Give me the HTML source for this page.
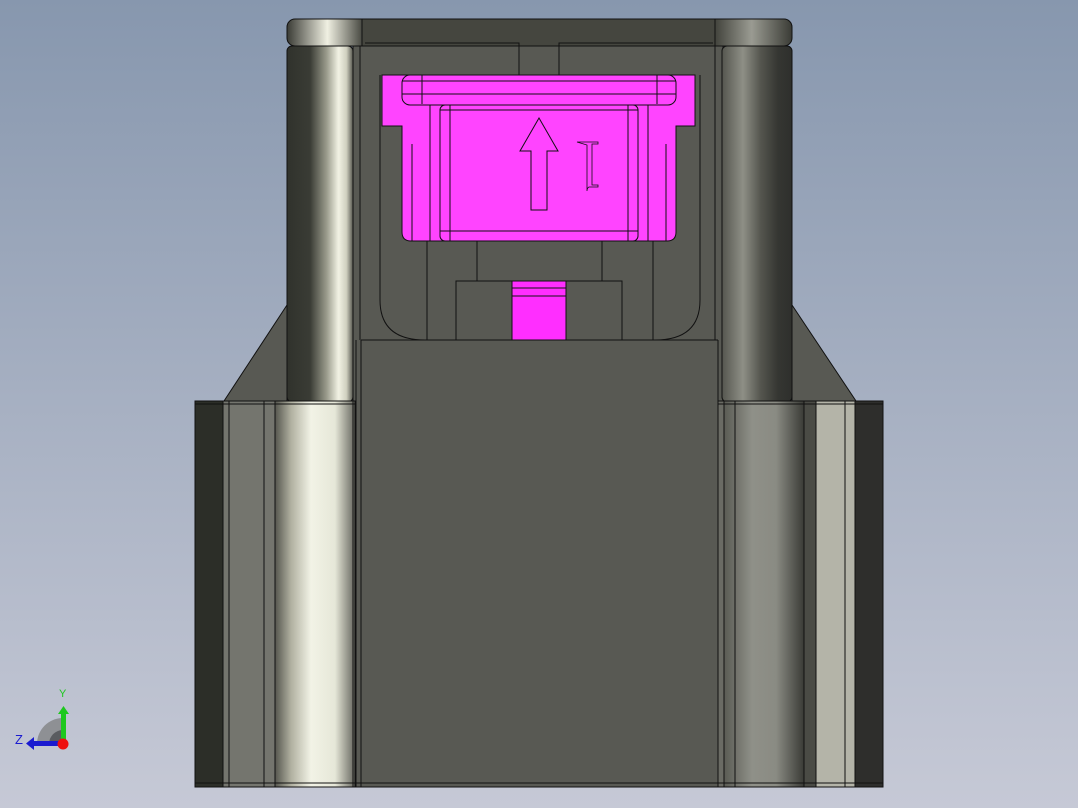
<!DOCTYPE html>
<html><head><meta charset="utf-8"><style>
html,body{margin:0;padding:0;width:1078px;height:808px;overflow:hidden}
svg{display:block}
</style></head><body>
<svg width="1078" height="808" viewBox="0 0 1078 808" xmlns="http://www.w3.org/2000/svg">
<defs>
<linearGradient id="bg" x1="0" y1="0" x2="0" y2="1">
<stop offset="0" stop-color="#8797ae"/><stop offset="1" stop-color="#c6c9d6"/></linearGradient>
<linearGradient id="lc" x1="0" y1="0" x2="1" y2="0">
<stop offset="0" stop-color="#30322c"/><stop offset="0.35" stop-color="#3a3c35"/><stop offset="0.6" stop-color="#9a9b8c"/><stop offset="0.78" stop-color="#f2f2e4"/><stop offset="0.9" stop-color="#d0d0c0"/><stop offset="1" stop-color="#55564e"/></linearGradient>
<linearGradient id="rc" x1="0" y1="0" x2="1" y2="0">
<stop offset="0" stop-color="#55564f"/><stop offset="0.3" stop-color="#8e8f86"/><stop offset="0.55" stop-color="#55564f"/><stop offset="0.8" stop-color="#353632"/><stop offset="1" stop-color="#2e2f2c"/></linearGradient>
<linearGradient id="lc2" x1="0" y1="0" x2="1" y2="0">
<stop offset="0" stop-color="#55564e"/><stop offset="0.2" stop-color="#b0b0a0"/><stop offset="0.45" stop-color="#f2f3e6"/><stop offset="0.75" stop-color="#e6e7d8"/><stop offset="1" stop-color="#65665e"/></linearGradient>
<linearGradient id="rc2" x1="0" y1="0" x2="1" y2="0">
<stop offset="0" stop-color="#5a5b54"/><stop offset="0.35" stop-color="#8f9088"/><stop offset="0.65" stop-color="#8a8b83"/><stop offset="1" stop-color="#3a3b36"/></linearGradient>
<linearGradient id="cap" x1="0" y1="0" x2="1" y2="0">
<stop offset="0" stop-color="#3a3b35"/><stop offset="0.08" stop-color="#f0f0e2"/><stop offset="0.15" stop-color="#45463f"/><stop offset="0.85" stop-color="#45463f"/><stop offset="0.92" stop-color="#9a9b92"/><stop offset="1" stop-color="#3a3b35"/></linearGradient>
</defs>
<rect width="1078" height="808" fill="url(#bg)"/>
<g stroke="#111" stroke-width="1">
<polygon points="224,401 287,305 287,401" fill="#585953"/>
<polygon points="792,305 856,401 792,401" fill="#585953"/>
<rect x="353" y="46" width="370" height="360" fill="#585953"/>
<path d="M380 75 V300 Q380 340 425 340 H655 Q700 340 700 300 V75" fill="#585953"/>
<line x1="360" y1="40" x2="360" y2="340"/>
<line x1="715" y1="40" x2="715" y2="340"/>
<line x1="427" y1="240" x2="427" y2="340"/>
<line x1="477" y1="240" x2="477" y2="340"/>
<line x1="602" y1="240" x2="602" y2="340"/>
<line x1="653" y1="240" x2="653" y2="340"/>
<rect x="456" y="281" width="166" height="59" fill="#585953"/>
<rect x="512" y="281" width="54" height="59" fill="#ff2eff"/>
<line x1="512" y1="288" x2="566" y2="288"/><line x1="512" y1="296" x2="566" y2="296"/>
<rect x="287" y="19" width="505" height="27" rx="8" fill="url(#cap)"/>
<line x1="362" y1="19" x2="362" y2="46"/><line x1="715" y1="19" x2="715" y2="46"/>
<path d="M365 43 H519 V75 M559 75 V43 H713" fill="none"/>
<rect x="287" y="46" width="66" height="356" rx="5" fill="url(#lc)"/>
<rect x="722" y="46" width="70" height="356" rx="5" fill="url(#rc)"/>
<path d="M382 75 H695 V126 H676 V232 Q676 241 667 241 H411 Q402 241 402 232 V126 H382 Z" fill="#ff44ff"/>
<rect x="402" y="75" width="274" height="30" rx="8" fill="#ff44ff"/>
<line x1="422" y1="75" x2="422" y2="104"/><line x1="657" y1="75" x2="657" y2="104"/>
<line x1="402" y1="81" x2="676" y2="81"/><line x1="402" y1="94" x2="676" y2="94"/>
<rect x="440" y="105" width="198" height="136" rx="5" fill="#ff44ff"/>
<line x1="450" y1="105" x2="450" y2="241"/><line x1="628" y1="105" x2="628" y2="241"/>
<line x1="440" y1="110" x2="638" y2="110"/><line x1="440" y1="231" x2="638" y2="231"/>
<line x1="412" y1="144" x2="412" y2="241"/><line x1="666" y1="144" x2="666" y2="241"/>
<line x1="430" y1="105" x2="430" y2="241"/><line x1="648" y1="105" x2="648" y2="241"/>
<path d="M539 118 L558 151 H547 V210 H531 V151 H520 Z" fill="none"/>
<path d="M577 142 H598 V144 H592 V185 H598 V187 H589 Q587 188 587 191 V145 Z" fill="none" stroke-width="0.8"/>
<rect x="195" y="401" width="688" height="386" fill="#585953"/>
<rect x="195" y="401" width="28" height="386" fill="#2c2e28"/>
<rect x="223" y="401" width="52" height="386" fill="#74756e"/>
<rect x="275" y="401" width="80" height="386" fill="url(#lc2)"/>
<rect x="355" y="401" width="8" height="386" fill="#8a8b80"/>
<rect x="716" y="401" width="8" height="386" fill="#6a6b64"/>
<rect x="724" y="401" width="80" height="386" fill="url(#rc2)"/>
<rect x="804" y="401" width="12" height="386" fill="#4a4b45"/>
<rect x="816" y="401" width="39" height="386" fill="#b4b4a8"/>
<rect x="855" y="401" width="28" height="386" fill="#2e2e2c"/>
<line x1="229" y1="401" x2="229" y2="787"/><line x1="264" y1="401" x2="264" y2="787"/>
<line x1="353" y1="401" x2="353" y2="787"/>
<line x1="735" y1="401" x2="735" y2="787"/>
<line x1="845" y1="401" x2="845" y2="787"/>
<rect x="356" y="340" width="362" height="447" fill="#585953" stroke="none"/>
<line x1="361" y1="340" x2="361" y2="787"/>
<line x1="718" y1="340" x2="718" y2="787"/>
<line x1="356" y1="340" x2="356" y2="787"/>
<line x1="361" y1="340" x2="718" y2="340"/>
<line x1="195" y1="404" x2="356" y2="404"/><line x1="718" y1="404" x2="883" y2="404"/>
<line x1="195" y1="783" x2="883" y2="783"/>
<path d="M195 401 H356 M718 401 H883 V787 H195 V401" fill="none"/>
</g>
<path d="M37 744 A26 26 0 0 1 63 718 V744 Z" fill="#8e9094"/>
<path d="M49 744 A14 14 0 0 1 63 730 V744 Z" fill="#5a5c60"/>
<rect x="61" y="712" width="5" height="32" fill="#1ec81e"/>
<polygon points="58,714 69,714 63.5,706" fill="#1ec81e"/>
<rect x="32" y="741" width="31" height="5" fill="#1a1ad0"/>
<polygon points="34,737 34,750 26,743.5" fill="#1a1ad0"/>
<circle cx="63" cy="744" r="5.5" fill="#ee1010"/>
<text x="59" y="697" font-family="Liberation Sans, sans-serif" font-size="11" fill="#1ec81e">Y</text>
<text x="15" y="744" font-family="Liberation Sans, sans-serif" font-size="13" fill="#1a1ad0">Z</text>
</svg>
</body></html>
